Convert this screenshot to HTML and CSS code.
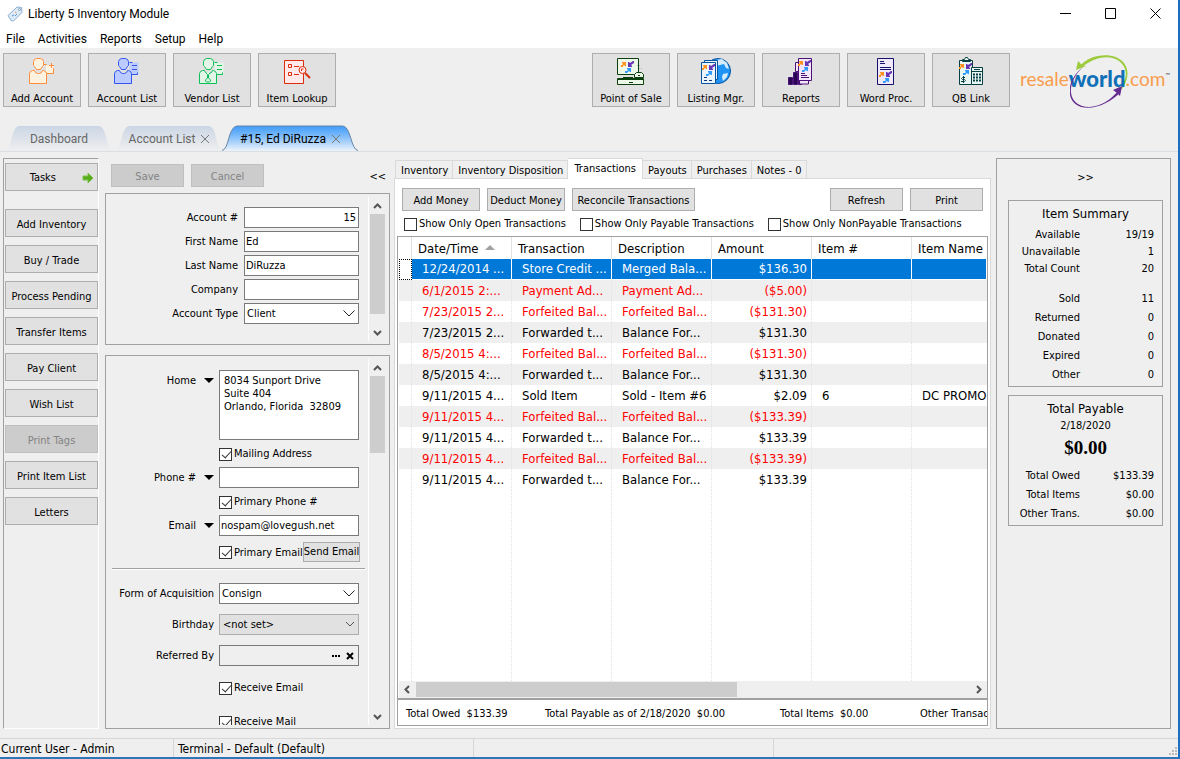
FILE: index.html
```html
<!DOCTYPE html>
<html lang="en">
<head>
    <meta charset="UTF-8">
    <title>Liberty 5 Inventory Module</title>
    <link rel="stylesheet" href="styles.css">
</head>
<body>
    <svg class="defs" width="0" height="0">
        <symbol id="arrows" viewBox="0 0 14 12">
            <path d="M0 6V4h1l1-1-1-1V1h4v4H4L3 4 2 5v1z" fill="#ff931e"/>
            <path d="M13 0v2l-3 2 1 1v1H7V1h1l1 1 3-2z" fill="#6a35b5"/>
            <path d="M4 12v-2h2l1-1-1-1V7h4v4H9L8 10l-2 2z" fill="#2f9bff"/>
        </symbol>
    </svg>
    <div class="window">
        <header class="titlebar">
            <svg class="app-icon" width="16" height="16" viewBox="0 0 16 16">
                <path d="M1 9.500 10 1l4.500.5.5 5L6.500 15 4 14.500z" fill="#dce9f6" stroke="#8db0d3"/>
                <circle cx="12.500" cy="3.500" r="1" fill="#fff" stroke="#7a9cc0"/>
                <path d="M5 10l2-1M8 10l2-2" stroke="#5b94dd"/>
                <path d="M8 6l1.500 1" stroke="#f0a050"/>
            </svg>
            <h1 class="title">Liberty 5 Inventory Module</h1>
            <button class="win-btn" aria-label="Minimize"><svg width="11" height="11"><path d="M0 5.500h11" stroke="#000"/></svg></button>
            <button class="win-btn" aria-label="Maximize"><svg width="11" height="11"><path d="M.5.5h10v10H.5z" fill="none" stroke="#000"/></svg></button>
            <button class="win-btn" aria-label="Close"><svg width="11" height="11"><path d="M.5.5l10 10M10.500.5l-10 10" stroke="#000"/></svg></button>
        </header>

        <nav class="menubar">
            <a href="#">File</a>
            <a href="#">Activities</a>
            <a href="#">Reports</a>
            <a href="#">Setup</a>
            <a href="#">Help</a>
        </nav>

        <div class="toolbar">
            <button class="tool">
                <svg width="30" height="28" viewBox="0 0 30 28" fill="#fff3e0" stroke="#ff8c3c">
                    <path d="M17 7.500h2v1h3M22.500 11.500h4v5h-7v-9" />
                    <path d="M19 8h7v8h-7z" stroke="none"/>
                    <path d="M24.500 6v5M22 8.500h5"/>
                    <path d="M2.500 26.500V16.500l1-2 2-1h2l1 2 2 1h2l2-1 1-2h1l2 1 1 2v10z"/>
                    <path d="M9.500 1.500h4l2 1 1 2v4l-1 1-2 3h-4l-2-3-1-1v-4l1-2z"/>
                </svg>
                Add Account
            </button>
            <button class="tool">
                <svg width="30" height="28" viewBox="0 0 30 28" fill="#bccbff" stroke="#3355ee">
                    <path d="M17.500 5.500h9v12h-9z" stroke="none"/>
                    <path d="M17.500 5.500h3M20 8.500h5M20 12.500h5M19.500 17.500h6v-2"/>
                    <path d="M2.500 26.500V16.500l1-2 2-1h2l1 2 2 1h2l2-1 1-2h1l2 1 1 2v10z"/>
                    <path d="M9.500 1.500h4l2 1 1 2v4l-1 1-2 3h-4l-2-3-1-1v-4l1-2z"/>
                </svg>
                Account List
            </button>
            <button class="tool">
                <svg width="30" height="28" viewBox="0 0 30 28" fill="#e2f5e6" stroke="#0dbf57">
                    <path d="M17.500 5.500h9v12h-9z" stroke="none"/>
                    <path d="M17.500 5.500h3M20 8.500h5M20 12.500h5M19.500 17.500h6v-2"/>
                    <path d="M2.500 26.500V16.500l1-2 2-1h2l1 2 2 1h2l2-1 1-2h1l2 1 1 2v10z"/>
                    <path d="M9.500 1.500h4l2 1 1 2v4l-1 1-2 3h-4l-2-3-1-1v-4l1-2z"/>
                    <path d="M8.500 15.500l2 2h1l2-2M10.500 18v3l-2 2v1l1 1h3l1-1v-1l-2-2v-3"/>
                </svg>
                Vendor List
            </button>
            <button class="tool">
                <svg width="30" height="28" viewBox="0 0 30 28" fill="#ffe9e9" stroke="#dd2c0c">
                    <path d="M2.500 3.500h19v23h-19z"/>
                    <path d="M6.500 7.500h3v3h-3zM6.500 15.500h3v3h-3zM12 9.500h5M12 17.500h5" fill="none"/>
                    <circle cx="20.500" cy="13" r="3.500"/>
                    <path d="M19.500 14v-2h2"/>
                    <path d="M23 16l5 5" stroke-width="2"/>
                </svg>
                Item Lookup
            </button>
            <span class="spacer"></span>
            <button class="tool">
                <svg width="30" height="28" viewBox="0 0 30 28" fill="#eef8e8" stroke="#0b3f0d">
                    <path d="M1.500 1.500h21v16h-21z"/>
                    <path d="M8 17.500h8M7 20.500h10"/>
                    <path d="M21 8.500h4M23 11.500h4" stroke="#b5b5b5" stroke-dasharray="1 1"/>
                    <path d="M18.500 20.500v-3l2-2h5l2 2v3z"/>
                    <path d="M22 18.500h2"/>
                    <path d="M1.500 21.500h26v6h-26zM1.500 22.500h26"/>
                    <path d="M13 25.500h4"/>
                    <use href="#arrows" x="5" y="4" width="14" height="12" stroke="none"/>
                </svg>
                Point of Sale
            </button>
            <button class="tool">
                <svg width="30" height="28" viewBox="0 0 30 28" fill="#eaf4fc" stroke="#0755a0">
                    <circle cx="17" cy="14" r="12.500" fill="#1f94f4"/>
                    <path d="M15 3l6-1 5 4 2 6-3-1-2-4-4 1-4 1zM22 17l5-1-1 4-4 4-1-4z" stroke="none" fill="#d5ecff"/>
                    <path d="M3.500 3.500h13v19h-13z"/>
                    <path d="M.5 5.500h14v21H.5z"/>
                    <path d="M3 20.500h3M3 23.500h3M8 23.500h3" stroke="#12357e"/>
                    <use href="#arrows" x="1" y="7" width="14" height="12" stroke="none"/>
                </svg>
                Listing Mgr.
            </button>
            <button class="tool">
                <svg width="30" height="28" viewBox="0 0 30 28" fill="#f4e6fa" stroke="#4a1277">
                    <path d="M2.500 20.500h4v7h-4zM7.500 15.500h4v12h-4z" fill="#280852"/>
                    <path d="M12.500 9.500h3v18h-3z" fill="#4b0b86"/>
                    <path d="M9.500 5.500h4v9h-4zM13.500 20h9v7h-9z"/>
                    <path d="M12.500 1.500h13v22h-13z"/>
                    <path d="M15 16.500h4M15 18.500h6M15 20.500h8"/>
                    <use href="#arrows" x="12" y="3" width="14" height="12" stroke="none"/>
                </svg>
                Reports
            </button>
            <button class="tool">
                <svg width="30" height="28" viewBox="0 0 30 28" fill="#efe9fa" stroke="#15116b">
                    <path d="M6.500 1.500h16v26h-16z"/>
                    <path d="M9 4.500h4M9 6.500h5M9 10.500h11M9 12.500h11"/>
                    <use href="#arrows" x="8" y="14" width="14" height="12" stroke="none"/>
                </svg>
                Word Proc.
            </button>
            <button class="tool">
                <svg width="30" height="28" viewBox="0 0 30 28" fill="#e8f6f4" stroke="#073f43">
                    <path d="M3.500 3.500h13v24h-13zM6.500 4.500v-2h2l1-2h2l1 2h2v2z"/>
                    <path d="M15.500 10.500h11v17h-11zM15.500 14.500h11M18 12.500h6"/>
                    <path d="M17 17.500h8M17 20.500h8M17 23.500h8" stroke-width="2" stroke-dasharray="2 1"/>
                    <path d="M9 20.500H6.500l-1 1 1 1h2l1 1-1 1H5M7.500 19v7" fill="none"/>
                    <use href="#arrows" x="3" y="6" width="14" height="12" stroke="none"/>
                </svg>
                QB Link
            </button>
            <a class="logo" href="#">
                <svg class="swoosh-back" width="60" height="54" viewBox="0 0 60 54">
                    <path d="M10 12C20 0 44-3 54 9c7 9 3 23-8 32 13-16 12-27 3-34C38-1 21 5 11 14z" fill="#9ccb3b"/>
                    <path d="M6 16l2-9 4 4 4 1z" fill="#9ccb3b"/>
                </svg>
                <span class="logo-text"><span>resale</span><b>world</b><span>.com</span><small>™</small></span>
                <svg class="swoosh-front" width="60" height="54" viewBox="0 0 60 54">
                    <path d="M13 13C-3 28-3 47 12 52c14 4 28-5 37-16l2 2C40 49 25 56 11 53-5 48-4 26 13 13z" fill="#662d91"/>
                    <path d="M43 36l9-4-2 10-3-3z" fill="#662d91"/>
                </svg>
            </a>
        </div>

        <nav class="doc-tabs">
            <a href="#" class="doc-tab">
                <svg viewBox="0 0 108 26" preserveAspectRatio="none"><path d="M0 26C7 24 6 2 14 1h80c8 1 7 23 14 25z" fill="url(#tabIdle)"/></svg>
                <span>Dashboard</span>
            </a>
            <a href="#" class="doc-tab">
                <svg viewBox="0 0 108 26" preserveAspectRatio="none"><path d="M0 26C7 24 6 2 14 1h80c8 1 7 23 14 25z" fill="url(#tabIdle)"/></svg>
                <span>Account List</span>
                <i class="tab-x"></i>
            </a>
            <a href="#" class="doc-tab active">
                <svg viewBox="0 0 136 26" preserveAspectRatio="none">
                    <defs>
                        <linearGradient id="tabIdle" x1="0" y1="0" x2="0" y2="1"><stop offset="0" stop-color="#cbd6e5"/><stop offset="1" stop-color="#efefef"/></linearGradient>
                        <linearGradient id="tabActive" x1="0" y1="0" x2="0" y2="1"><stop offset="0" stop-color="#3f9cfa"/><stop offset=".4" stop-color="#7bbafa"/><stop offset="1" stop-color="#e9f2fb"/></linearGradient>
                    </defs>
                    <path d="M0 25.500C7 25 6 2 15 1h106c8 1 8 24 15 24.500" fill="url(#tabActive)" stroke="#6585a8"/>
                </svg>
                <span>#15, Ed DiRuzza</span>
                <i class="tab-x"></i>
            </a>
        </nav>

        <main class="workspace">
            <aside class="tasks">
                <button class="btn task-head">Tasks
                    <svg width="12" height="12" viewBox="0 0 12 12"><path d="M1 4h5V1l5 5-5 5V8H1z" fill="#58ad1c" stroke="#7cc04a"/></svg>
                </button>
                <button class="btn">Add Inventory</button>
                <button class="btn">Buy / Trade</button>
                <button class="btn">Process Pending</button>
                <button class="btn">Transfer Items</button>
                <button class="btn">Pay Client</button>
                <button class="btn">Wish List</button>
                <button class="btn" disabled>Print Tags</button>
                <button class="btn">Print Item List</button>
                <button class="btn">Letters</button>
            </aside>

            <section class="account">
                <div class="account-actions">
                    <button class="btn" disabled>Save</button>
                    <button class="btn" disabled>Cancel</button>
                    <button class="collapse">&lt;&lt;</button>
                </div>

                <div class="panel panel-name">
                    <div class="panel-body">
                        <div class="field"><label for="acct">Account #</label><input id="acct" class="num" type="text" value="15"></div>
                        <div class="field"><label for="first">First Name</label><input id="first" type="text" value="Ed"></div>
                        <div class="field"><label for="last">Last Name</label><input id="last" type="text" value="DiRuzza"></div>
                        <div class="field"><label for="company">Company</label><input id="company" type="text"></div>
                        <div class="field"><label for="type">Account Type</label>
                            <span class="select"><select id="type"><option>Client</option></select>
                                <svg width="12" height="7"><path d="M.5.5 6 6 11.500.5" fill="none" stroke="#222"/></svg></span>
                        </div>
                    </div>
                    <div class="vscroll">
                        <svg width="9" height="6"><path d="M1 5l3.500-3.500L8 5" fill="none" stroke="#555" stroke-width="2"/></svg>
                        <div class="thumb thumb-name"></div>
                        <svg width="9" height="6"><path d="M1 1l3.500 3.500L8 1" fill="none" stroke="#555" stroke-width="2"/></svg>
                    </div>
                </div>

                <div class="panel panel-contact">
                    <div class="panel-body">
                        <div class="contact">
                            <label class="drop" for="home">Home</label>
                            <textarea id="home">8034 Sunport Drive
Suite 404
Orlando, Florida  32809</textarea>
                        </div>
                        <label class="check"><input type="checkbox" checked>Mailing Address</label>
                        <div class="contact">
                            <label class="drop" for="phone">Phone #</label>
                            <input id="phone" type="text">
                        </div>
                        <label class="check"><input type="checkbox" checked>Primary Phone #</label>
                        <div class="contact">
                            <label class="drop" for="email">Email</label>
                            <input id="email" type="text" value="nospam@lovegush.net">
                        </div>
                        <div class="email-row">
                            <label class="check"><input type="checkbox" checked>Primary Email</label>
                            <button class="btn">Send Email</button>
                        </div>
                        <hr>
                        <div class="extra">
                            <label for="form">Form of Acquisition</label>
                            <span class="select"><select id="form"><option>Consign</option></select>
                                <svg width="12" height="7"><path d="M.5.5 6 6 11.500.5" fill="none" stroke="#222"/></svg></span>
                            <label for="birthday">Birthday</label>
                            <span class="select gray"><select id="birthday"><option>&lt;not set&gt;</option></select>
                                <svg width="10" height="6"><path d="M1 1l4 4 4-4" fill="none" stroke="#555"/></svg></span>
                            <label for="ref">Referred By</label>
                            <span class="referred"><input id="ref" type="text">
                                <button aria-label="Browse"><svg width="8" height="2"><path d="M0 1h8" stroke="#000" stroke-width="2" stroke-dasharray="2 1"/></svg></button>
                                <button aria-label="Clear"><svg width="8" height="8"><path d="M1 1l6 6M7 1 1 7" stroke="#000" stroke-width="2"/></svg></button>
                            </span>
                        </div>
                        <label class="check receive"><input type="checkbox" checked>Receive Email</label>
                        <label class="check receive"><input type="checkbox" checked>Receive Mail</label>
                    </div>
                    <div class="vscroll">
                        <svg width="9" height="6"><path d="M1 5l3.500-3.500L8 5" fill="none" stroke="#555" stroke-width="2"/></svg>
                        <div class="thumb thumb-contact"></div>
                        <svg width="9" height="6"><path d="M1 1l3.500 3.500L8 1" fill="none" stroke="#555" stroke-width="2"/></svg>
                    </div>
                </div>
            </section>

            <section class="detail">
                <nav class="page-tabs">
                    <a href="#">Inventory</a>
                    <a href="#">Inventory Disposition</a>
                    <a href="#" class="active">Transactions</a>
                    <a href="#">Payouts</a>
                    <a href="#">Purchases</a>
                    <a href="#">Notes - 0</a>
                </nav>
                <div class="page">
                    <div class="page-actions">
                        <button class="btn w78">Add Money</button>
                        <button class="btn w78">Deduct Money</button>
                        <button class="btn w123">Reconcile Transactions</button>
                        <span class="spacer"></span>
                        <button class="btn w73">Refresh</button>
                        <button class="btn w73">Print</button>
                    </div>
                    <div class="filters">
                        <label class="check"><input type="checkbox">Show Only Open Transactions</label>
                        <label class="check"><input type="checkbox">Show Only Payable Transactions</label>
                        <label class="check"><input type="checkbox">Show Only NonPayable Transactions</label>
                    </div>
                    <div class="grid">
                        <div class="grid-body">
                            <table>
                                <colgroup><col class="c-mark"><col class="c"><col class="c"><col class="c"><col class="c"><col class="c"><col></colgroup>
                                <thead>
                                    <tr><th></th><th>Date/Time <i class="sort"></i></th><th>Transaction</th><th>Description</th><th>Amount</th><th>Item #</th><th>Item Name</th></tr>
                                </thead>
                                <tbody>
                                    <tr class="selected"><td></td><td>12/24/2014 ...</td><td>Store Credit ...</td><td>Merged Bala...</td><td>$136.30</td><td></td><td></td></tr>
                                    <tr class="red"><td></td><td>6/1/2015 2:...</td><td>Payment Ad...</td><td>Payment Ad...</td><td>($5.00)</td><td></td><td></td></tr>
                                    <tr class="red"><td></td><td>7/23/2015 2...</td><td>Forfeited Bal...</td><td>Forfeited Bal...</td><td>($131.30)</td><td></td><td></td></tr>
                                    <tr><td></td><td>7/23/2015 2...</td><td>Forwarded t...</td><td>Balance For...</td><td>$131.30</td><td></td><td></td></tr>
                                    <tr class="red"><td></td><td>8/5/2015 4:...</td><td>Forfeited Bal...</td><td>Forfeited Bal...</td><td>($131.30)</td><td></td><td></td></tr>
                                    <tr><td></td><td>8/5/2015 4:...</td><td>Forwarded t...</td><td>Balance For...</td><td>$131.30</td><td></td><td></td></tr>
                                    <tr><td></td><td>9/11/2015 4...</td><td>Sold Item</td><td>Sold - Item #6</td><td>$2.09</td><td>6</td><td>DC PROMO</td></tr>
                                    <tr class="red"><td></td><td>9/11/2015 4...</td><td>Forfeited Bal...</td><td>Forfeited Bal...</td><td>($133.39)</td><td></td><td></td></tr>
                                    <tr><td></td><td>9/11/2015 4...</td><td>Forwarded t...</td><td>Balance For...</td><td>$133.39</td><td></td><td></td></tr>
                                    <tr class="red"><td></td><td>9/11/2015 4...</td><td>Forfeited Bal...</td><td>Forfeited Bal...</td><td>($133.39)</td><td></td><td></td></tr>
                                    <tr><td></td><td>9/11/2015 4...</td><td>Forwarded t...</td><td>Balance For...</td><td>$133.39</td><td></td><td></td></tr>
                                    <tr class="filler"><td></td><td></td><td></td><td></td><td></td><td></td><td></td></tr>
                                </tbody>
                            </table>
                        </div>
                        <div class="hscroll">
                            <svg width="6" height="9"><path d="M5 1 1.500 4.500 5 8" fill="none" stroke="#555" stroke-width="2"/></svg>
                            <div class="track"><div class="thumb"></div></div>
                            <svg width="6" height="9"><path d="M1 1l3.500 3.500L1 8" fill="none" stroke="#555" stroke-width="2"/></svg>
                        </div>
                    </div>
                    <div class="totals">
                        <span>Total Owed&nbsp; $133.39</span>
                        <span>Total Payable as of 2/18/2020&nbsp; $0.00</span>
                        <span>Total Items&nbsp; $0.00</span>
                        <span>Other Transactions&nbsp; $0.00</span>
                    </div>
                </div>
            </section>

            <aside class="summary">
                <button class="collapse">&gt;&gt;</button>
                <div class="card">
                    <h2>Item Summary</h2>
                    <dl class="tight">
                        <dt>Available</dt><dd>19/19</dd>
                        <dt>Unavailable</dt><dd>1</dd>
                        <dt>Total Count</dt><dd>20</dd>
                    </dl>
                    <dl>
                        <dt>Sold</dt><dd>11</dd>
                        <dt>Returned</dt><dd>0</dd>
                        <dt>Donated</dt><dd>0</dd>
                        <dt>Expired</dt><dd>0</dd>
                        <dt>Other</dt><dd>0</dd>
                    </dl>
                </div>
                <div class="card">
                    <h2>Total Payable</h2>
                    <p class="date">2/18/2020</p>
                    <p class="big">$0.00</p>
                    <dl>
                        <dt>Total Owed</dt><dd>$133.39</dd>
                        <dt>Total Items</dt><dd>$0.00</dd>
                        <dt>Other Trans.</dt><dd>$0.00</dd>
                    </dl>
                </div>
            </aside>
        </main>

        <footer class="statusbar">
            <span class="s-user">Current User - Admin</span>
            <span class="s-cell">Terminal - Default (Default)</span>
            <span class="s-cell"></span>
            <svg width="9" height="9" viewBox="0 0 9 9" fill="#bbb"><path d="M6 0h2v2H6zM3 3h2v2H3zM6 3h2v2H6zM0 6h2v2H0zM3 6h2v2H3zM6 6h2v2H6z"/></svg>
        </footer>
    </div>
</body>
</html>
```
FILE: styles.css
```css
* {
    box-sizing: border-box;
}

body {
    margin: 0;
    background-color: #efefef;
    color: #000;
    font: 11px/14px "DejaVu Sans Condensed", "Noto Sans", sans-serif;
}

button, input, select, textarea {
    font: inherit;
    color: inherit;
    margin: 0;
    border-radius: 0;
}

a {
    color: inherit;
    text-decoration: none;
}

.defs {
    position: absolute;
}

.window {
    display: flex;
    flex-direction: column;
    height: 100vh;
    border-right: 2px solid #1a6fc0;
    border-bottom: 2px solid #2f76b8;
}

.spacer {
    flex: 1;
}

/* title and menu */
.titlebar {
    display: flex;
    align-items: center;
    height: 27px;
    background-color: #fff;
    padding-left: 7px;
    font: 12px/16px Roboto, "Noto Sans", sans-serif;
}

.title {
    flex: 1;
    margin: 0 0 0 5px;
    font-size: 12px;
    font-weight: normal;
}

.win-btn {
    width: 45px;
    height: 27px;
    padding: 0;
    border: none;
    background: none;
}

.win-btn svg {
    display: block;
    margin: auto;
}

.menubar {
    display: flex;
    gap: 13px;
    height: 21px;
    padding: 4px 6px;
    background-color: #fff;
    font: 12px/16px Roboto, "Noto Sans", sans-serif;
}

/* toolbar */
.toolbar {
    display: flex;
    gap: 7px;
    padding: 5px 7px 0 3px;
    height: 77px;
}

.tool {
    display: flex;
    flex-direction: column;
    align-items: center;
    justify-content: space-between;
    width: 78px;
    height: 54px;
    padding: 3px 0 0;
    background-color: #e1e1e1;
    border: 1px solid #adadad;
    white-space: nowrap;
}

.logo {
    position: relative;
    width: 154px;
    height: 56px;
    padding: 12px 0 0 3px;
}

.logo-text {
    position: relative;
    display: flex;
    font: 19px/28px Lato, sans-serif;
    color: #f99d4d;
}

.logo-text b {
    color: #0f70b8;
    font-size: 22px;
    font-weight: 900;
}

.logo-text small {
    font-size: 6px;
    line-height: 20px;
    color: #444;
}

.swoosh-back, .swoosh-front {
    position: absolute;
    top: 1px;
    left: 53px;
}

/* document tabs */
.doc-tabs {
    display: flex;
    gap: 2px;
    height: 27px;
    padding-left: 5px;
    border-bottom: 1px solid #dadfe3;
    font: 12px/26px Roboto, "Noto Sans", sans-serif;
}

.doc-tab {
    position: relative;
    display: flex;
    align-items: center;
    justify-content: center;
    gap: 6px;
    width: 108px;
    height: 26px;
    padding-top: 1px;
    color: #666;
}

.doc-tab.active {
    width: 136px;
    margin-left: -3px;
    color: #000;
}

.doc-tab svg {
    position: absolute;
    inset: 0;
    width: 100%;
    height: 100%;
}

.doc-tab span, .tab-x {
    position: relative;
}

.tab-x {
    width: 8px;
    height: 8px;
    background: linear-gradient(45deg, transparent 46%, #777 46%, #777 54%, transparent 54%), linear-gradient(-45deg, transparent 46%, #777 46%, #777 54%, transparent 54%);
}

/* work area */
.workspace {
    display: flex;
    flex: 1;
    min-height: 0;
    padding: 6px 7px 9px 3px;
}

.btn {
    height: 23px;
    padding: 2px 0 0;
    background-color: #e1e1e1;
    border: 1px solid #adadad;
    white-space: nowrap;
}

.btn:disabled {
    background-color: #ccc;
    border-color: #bfbfbf;
    color: #838383;
}

.tasks {
    display: flex;
    flex-direction: column;
    gap: 8px;
    width: 96px;
    padding: 4px 0 0 1px;
    border: 1px solid #a0a0a0;
    border-right-color: #fff;
    border-bottom-color: #fff;
}

.tasks .btn {
    height: 28px;
    width: 93px;
    padding-top: 3px;
}

.tasks .task-head {
    display: flex;
    align-items: center;
    justify-content: flex-end;
    gap: 26px;
    margin-bottom: 10px;
    padding-top: 1px;
}

.task-head svg {
    margin-right: 3px;
}

.account {
    display: flex;
    flex-direction: column;
    width: 285px;
    margin-left: 6px;
}

.account-actions {
    display: flex;
    gap: 7px;
    height: 35px;
    padding: 6px 4px 0 6px;
}

.account-actions .btn {
    width: 73px;
}

.collapse {
    padding: 0;
    border: none;
    background: none;
}

.account-actions .collapse {
    height: 23px;
    margin-left: auto;
    padding-top: 2px;
}

.panel {
    display: flex;
    gap: 3px;
    padding: 3px 4px 3px 0;
    border: 1px solid #a0a0a0;
}

.panel-name {
    height: 152px;
    margin-bottom: 10px;
}

.panel-contact {
    flex: 1;
    min-height: 0;
}

.panel-body {
    flex: 1;
    min-width: 0;
    overflow: hidden;
}

.panel-name .panel-body {
    padding: 10px 6px 0 0;
}

.panel-contact .panel-body {
    padding: 11px 0 0;
}

.panel input[type=text], .panel select, .panel textarea {
    height: 21px;
    padding: 0 2px 1px 1px;
    background-color: #fff;
    border: 1px solid #7a7a7a;
    outline: none;
}

.field {
    display: grid;
    grid-template-columns: 1fr 115px;
    gap: 6px;
    align-items: center;
    margin-bottom: 3px;
}

.field label, .extra label {
    text-align: right;
}

.field input {
    width: 100%;
}

.field .num {
    text-align: right;
}

.select {
    position: relative;
    display: block;
    height: 21px;
}

.panel .select select {
    display: block;
    width: 100%;
    padding: 0 2px;
    appearance: none;
}

.panel .select.gray select {
    padding: 1px 3px 0;
    background-color: #e1e1e1;
    border-color: #adadad;
}

.select svg {
    position: absolute;
    top: 7px;
    right: 4px;
}

.vscroll {
    display: flex;
    flex-direction: column;
    align-items: center;
    width: 17px;
    padding: 6px 0 5px;
    border-left: 1px solid #fff;
}

.vscroll svg:last-child {
    margin-top: auto;
}

.thumb {
    background-color: #cdcdcd;
}

.vscroll .thumb {
    width: 15px;
    margin-top: 5px;
}

.thumb-name {
    height: 100px;
}

.thumb-contact {
    height: 77px;
}

.contact {
    display: grid;
    grid-template-columns: 108px 140px;
    gap: 5px;
    height: 21px;
}

.contact:first-child {
    height: 70px;
}

.drop {
    display: flex;
    justify-content: flex-end;
    gap: 8px;
    height: 21px;
    align-items: center;
}

.drop::after {
    content: '';
    border: 5px solid transparent;
    border-top-color: #000;
    border-bottom: none;
}

.panel textarea {
    height: 70px;
    padding: 3px 4px;
    resize: none;
    overflow: hidden;
    line-height: 13px;
}

.check {
    display: flex;
    align-items: center;
    gap: 2px;
    height: 27px;
    padding-top: 1px;
    white-space: nowrap;
}

.panel .check {
    margin-left: 113px;
}

.check input {
    position: relative;
    flex: none;
    width: 13px;
    height: 13px;
    appearance: none;
    background-color: #fff;
    border: 1px solid #333;
}

.check input:checked::after {
    content: '';
    position: absolute;
    left: 2px;
    top: 2px;
    width: 8px;
    height: 4px;
    border: 1px solid #333;
    border-top: none;
    border-right: none;
    transform: rotate(-48deg);
}

.email-row {
    display: flex;
    align-items: center;
    height: 32px;
}

.email-row .btn {
    flex: 1;
    height: 20px;
    margin-right: 6px;
    padding-top: 0;
}

.panel hr {
    height: 2px;
    margin: 0 0 13px 6px;
    border: none;
    border-top: 1px solid #a0a0a0;
    border-bottom: 1px solid #fff;
}

.extra {
    display: grid;
    grid-template-columns: 108px 140px;
    gap: 10px 5px;
    align-items: center;
    margin-bottom: 8px;
}

.referred {
    display: flex;
    align-items: center;
    gap: 6px;
    height: 21px;
    padding-right: 4px;
    border: 1px solid #7a7a7a;
}

.panel .referred input {
    flex: 1;
    min-width: 0;
    height: 19px;
    background: none;
    border: none;
}

.referred button {
    display: flex;
    padding: 0;
    border: none;
    background: none;
}

.panel .receive {
    margin-bottom: 7px;
}

/* transactions page */
.detail {
    display: flex;
    flex-direction: column;
    flex: 1;
    min-width: 0;
    margin-left: 4px;
}

.page-tabs {
    display: flex;
    align-items: flex-end;
    height: 20px;
    padding-left: 1px;
}

.page-tabs a {
    height: 18px;
    padding: 3px 4px 0 5px;
    border: 1px solid #d9d9d9;
    border-width: 1px 1px 0 0;
    white-space: nowrap;
}

.page-tabs a:first-child {
    border-left-width: 1px;
}

.page-tabs .active {
    position: relative;
    height: 21px;
    margin-bottom: -1px;
    padding: 3px 6px 0;
    background-color: #fff;
}

.page {
    display: flex;
    flex-direction: column;
    flex: 1;
    min-height: 0;
    padding: 9px 2px 2px;
    background-color: #fff;
    border: 1px solid #d9d9d9;
}

.page-actions {
    display: flex;
    gap: 7px;
    padding: 0 5px;
}

.w73 {
    width: 73px;
}

.w78 {
    width: 78px;
}

.w123 {
    width: 123px;
}

.filters {
    display: flex;
    gap: 14px;
    padding-left: 7px;
}

.filters .check {
    height: 25px;
}

.grid {
    display: flex;
    flex-direction: column;
    flex: 1;
    min-height: 0;
    padding: 0 0 0 1px;
    border: 1px solid #a0a0a0;
}

.grid-body {
    flex: 1;
    min-height: 0;
    overflow: hidden;
}

table {
    width: 100%;
    height: 100%;
    table-layout: fixed;
    border-collapse: separate;
    border-spacing: 0;
    font-size: 13px;
    line-height: 20px;
}

.c-mark {
    width: 13px;
}

.c {
    width: 100px;
}

th, td {
    height: 21px;
    padding: 0 0 0 10px;
    border-right: 1px dotted #e2e2e2;
    overflow: hidden;
    white-space: nowrap;
    text-align: left;
}

th {
    height: 22px;
    padding: 2px 0 0 6px;
    border-right-style: solid;
    font-weight: normal;
}

td:nth-child(5) {
    padding: 0 4px 0 0;
    text-align: right;
}

th:last-child, td:last-child {
    border-right: none;
}

tbody tr:nth-child(even):not(.filler) td {
    background-color: #efefef;
}

.red {
    color: #f00;
}

.selected td {
    background-color: #0078d7;
    border-right: 1px solid #fff;
    border-bottom: 1px solid #fff;
    color: #fff;
}

.selected td:first-child {
    background-color: #fff;
    border: 1px dotted #000;
}

.filler td {
    height: auto;
}

.sort {
    display: inline-block;
    margin: 0 0 3px 3px;
    border: 5px solid transparent;
    border-bottom-color: #a0a0a0;
    border-top: none;
}

.hscroll {
    display: flex;
    align-items: center;
    height: 17px;
    padding: 0 5px;
    background-color: #efefef;
}

.track {
    flex: 1;
    padding: 0 6px;
}

.track .thumb {
    width: 58%;
    height: 15px;
}

.totals {
    display: grid;
    grid-template-columns: 139px 235px 140px auto;
    height: 27px;
    padding: 2px 0 0 8px;
    align-items: center;
    border: 1px solid #a0a0a0;
    overflow: hidden;
    white-space: nowrap;
}

/* right side summary */
.summary {
    width: 175px;
    margin-left: 5px;
    padding: 0 7px 0 11px;
    border: 1px solid #a0a0a0;
}

.summary .collapse {
    display: block;
    height: 38px;
    margin: 0 auto 3px;
}

.card {
    margin-bottom: 8px;
    padding: 4px 8px 2px;
    border: 1px solid #a0a0a0;
    text-align: center;
}

.card h2 {
    margin: 0;
    font-size: 13px;
    font-weight: normal;
    line-height: 17px;
}

.card p {
    margin: 0;
}

.card dl {
    display: grid;
    grid-template-columns: 63px 1fr;
    margin: 0;
    line-height: 19px;
    text-align: right;
}

.card dd {
    margin: 0;
}

.card .tight {
    margin: 4px 0 12px;
    line-height: 17px;
}

.card .date {
    line-height: 17px;
}

.card .big {
    margin: 1px 0 5px;
    font: bold 19px/26px "Liberation Serif", serif;
}

/* status bar */
.statusbar {
    display: flex;
    height: 19px;
    border-top: 1px solid #d7d7d7;
    font-size: 12px;
    line-height: 20px;
}

.s-user {
    width: 174px;
    padding-left: 1px;
    border-right: 1px solid #d7d7d7;
}

.s-cell {
    width: 300px;
    padding-left: 4px;
    border-right: 1px solid #d7d7d7;
}

.statusbar svg {
    margin: 8px 0 0 auto;
}
```
